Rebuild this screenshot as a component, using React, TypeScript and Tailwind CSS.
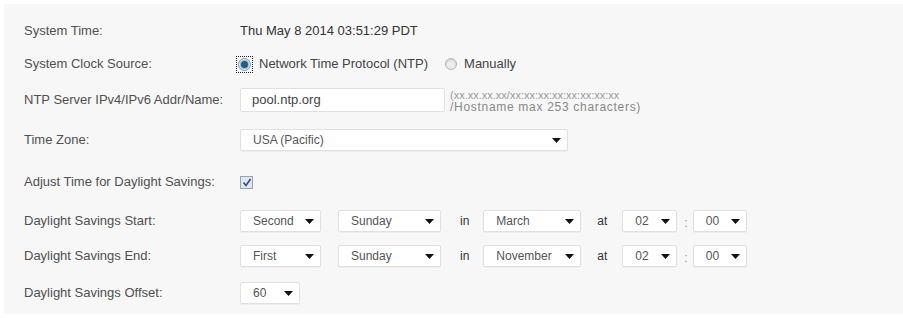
import React from "react";

const Arrow = () => (
  <svg width="9" height="5" viewBox="0 0 9 5" className="shrink-0">
    <path d="M0 0 L9 0 L4.5 5 Z" fill="#111" />
  </svg>
);

function Sel({ value, w, cls = "" }: { value: string; w: string; cls?: string }) {
  return (
    <div
      className={`${w} ${cls} h-[22px] bg-white border border-[#e0e0e0] rounded-[2px] flex items-center justify-between pl-3 pr-[6px] text-[12px] text-[#555] shadow-[0_1px_1px_rgba(0,0,0,0.04)]`}
    >
      <span>{value}</span>
      <Arrow />
    </div>
  );
}

function Row({ label, h, children }: { label: string; h: string; children?: React.ReactNode }) {
  return (
    <div className={`flex items-center ${h}`}>
      <div className="w-[216px] shrink-0 text-[13px] text-[#505050]">{label}</div>
      <div className="flex items-center">{children}</div>
    </div>
  );
}

export default function App() {
  return (
    <div className="w-[903px] h-[318px] bg-white pt-[4px] pl-[4px]" style={{ fontFamily: '"Liberation Sans", Arial, sans-serif' }}>
      <div className="h-[310px] bg-[#f7f7f7] pt-[11px] pl-[20px]">
        <Row label="System Time:" h="h-[32px]">
          <span className="text-[13px] text-[#333]">Thu May 8 2014 03:51:29 PDT</span>
        </Row>
        <Row label="System Clock Source:" h="h-[34px]">
          <div className="ml-[-4px] w-[17px] h-[17px] border border-dotted border-[#222] flex items-center justify-center">
            <div className="w-[13px] h-[13px] rounded-full border border-[#8a9aa6] bg-[#e8eef2] flex items-center justify-center">
              <div className="w-[7px] h-[7px] rounded-full bg-[#1f5f8a] shadow-[0_0_1px_1px_rgba(60,140,190,0.6)]" />
            </div>
          </div>
          <span className="ml-[6px] text-[13px] text-[#444]">Network Time Protocol (NTP)</span>
          <div className="ml-[17px] w-[12px] h-[12px] rounded-full border border-[#b5b5b5] bg-[#ececec] shadow-[inset_0_1px_2px_rgba(0,0,0,0.15)]" />
          <span className="ml-[7px] text-[13px] text-[#444]">Manually</span>
        </Row>
        <Row label="NTP Server IPv4/IPv6 Addr/Name:" h="h-[38px]">
          <div className="w-[205px] h-[24px] bg-white border border-[#e0e0e0] rounded-[2px] flex items-center pl-[11px] text-[13px] text-[#444]">
            pool.ntp.org
          </div>
          <div className="ml-[5px] flex flex-col leading-[12px] mt-[2px]">
            <span className="text-[11px] text-[#999]">(xx.xx.xx.xx/xx:xx:xx:xx:xx:xx:xx:xx</span>
            <span className="text-[12px] text-[#888] tracking-[0.7px]">/Hostname max 253 characters)</span>
          </div>
        </Row>
        <Row label="Time Zone:" h="h-[42px]">
          <Sel value="USA (Pacific)" w="w-[328px]" />
        </Row>
        <Row label="Adjust Time for Daylight Savings:" h="h-[42px]">
          <div className="w-[13px] h-[13px] border border-[#9aa4b0] bg-[#dfe6ee] flex items-center justify-center">
            <svg width="10" height="9" viewBox="0 0 10 9">
              <path d="M1.5 4.5 L4 7.5 L8.5 1" stroke="#2a4d9a" strokeWidth="1.6" fill="none" />
            </svg>
          </div>
        </Row>
        <Row label="Daylight Savings Start:" h="h-[36px]">
          <Sel value="Second" w="w-[81px]" />
          <Sel value="Sunday" w="w-[103px]" cls="ml-[17px]" />
          <span className="ml-[19px] text-[12px] text-[#333]">in</span>
          <Sel value="March" w="w-[98px]" cls="ml-[14px]" />
          <span className="ml-[16px] text-[12px] text-[#333]">at</span>
          <Sel value="02" w="w-[55px]" cls="ml-[15px]" />
          <span className="ml-[7px] text-[12px] text-[#999] mt-[4px]">:</span>
          <Sel value="00" w="w-[54px]" cls="ml-[5px]" />
        </Row>
        <Row label="Daylight Savings End:" h="h-[34px]">
          <Sel value="First" w="w-[81px]" />
          <Sel value="Sunday" w="w-[103px]" cls="ml-[17px]" />
          <span className="ml-[19px] text-[12px] text-[#333]">in</span>
          <Sel value="November" w="w-[98px]" cls="ml-[14px]" />
          <span className="ml-[16px] text-[12px] text-[#333]">at</span>
          <Sel value="02" w="w-[55px]" cls="ml-[15px]" />
          <span className="ml-[7px] text-[12px] text-[#999] mt-[4px]">:</span>
          <Sel value="00" w="w-[54px]" cls="ml-[5px]" />
        </Row>
        <Row label="Daylight Savings Offset:" h="h-[40px]">
          <Sel value="60" w="w-[60px]" />
        </Row>
      </div>
    </div>
  );
}
